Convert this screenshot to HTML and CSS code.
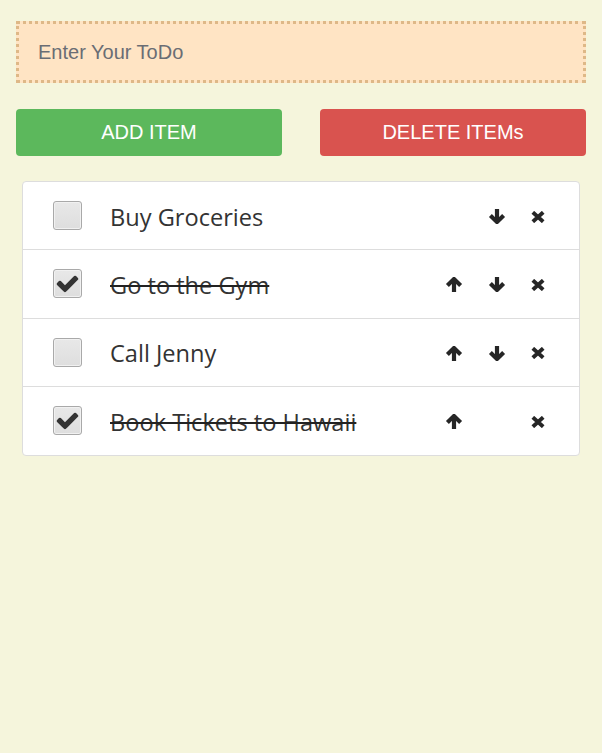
FILE: index.html
```html
<!DOCTYPE html>
<html lang="en">
<head>
<meta charset="utf-8">
<title>ToDo</title>
<link rel="stylesheet" href="styles.css">
</head>
<body>
<div class="app">
  <input class="todo-input" type="text" placeholder="Enter Your ToDo">
  <div class="actions">
    <button class="btn btn-add">ADD ITEM</button>
    <button class="btn btn-delete">DELETE ITEMs</button>
  </div>
  <ul class="list">
    <li class="item">
      <span class="box"></span>
      <span class="label">Buy Groceries</span>
      <span class="tools">
        <span class="slot"></span>
        <span class="slot"><svg class="ic" viewBox="0 0 18 15"><path d="M9 0V12.5"/><path d="M2.4 6.6L9 13L15.6 6.6"/></svg></span>
        <span class="slot slot-x"><svg class="ic ic-x" viewBox="0 0 14 12"><path d="M1.8 1.3L12.2 10.7M12.2 1.3L1.8 10.7"/></svg></span>
      </span>
    </li>
    <li class="item">
      <span class="box checked"><svg class="tick" viewBox="0 0 1792 1792"><path d="M1671 566q0 40-28 68l-724 724-136 136q-28 28-68 28t-68-28l-136-136-362-362q-28-28-28-68t28-68l136-136q28-28 68-28t68 28l294 295 656-657q28-28 68-28t68 28l136 136q28 28 28 68z"/></svg></span>
      <span class="label done">Go to the Gym</span>
      <span class="tools">
        <span class="slot"><svg class="ic" viewBox="0 0 18 15"><path d="M9 15V2.5"/><path d="M2.4 8.4L9 2L15.6 8.4"/></svg></span>
        <span class="slot"><svg class="ic" viewBox="0 0 18 15"><path d="M9 0V12.5"/><path d="M2.4 6.6L9 13L15.6 6.6"/></svg></span>
        <span class="slot slot-x"><svg class="ic ic-x" viewBox="0 0 14 12"><path d="M1.8 1.3L12.2 10.7M12.2 1.3L1.8 10.7"/></svg></span>
      </span>
    </li>
    <li class="item">
      <span class="box"></span>
      <span class="label">Call Jenny</span>
      <span class="tools">
        <span class="slot"><svg class="ic" viewBox="0 0 18 15"><path d="M9 15V2.5"/><path d="M2.4 8.4L9 2L15.6 8.4"/></svg></span>
        <span class="slot"><svg class="ic" viewBox="0 0 18 15"><path d="M9 0V12.5"/><path d="M2.4 6.6L9 13L15.6 6.6"/></svg></span>
        <span class="slot slot-x"><svg class="ic ic-x" viewBox="0 0 14 12"><path d="M1.8 1.3L12.2 10.7M12.2 1.3L1.8 10.7"/></svg></span>
      </span>
    </li>
    <li class="item">
      <span class="box checked"><svg class="tick" viewBox="0 0 1792 1792"><path d="M1671 566q0 40-28 68l-724 724-136 136q-28 28-68 28t-68-28l-136-136-362-362q-28-28-28-68t28-68l136-136q28-28 68-28t68 28l294 295 656-657q28-28 68-28t68 28l136 136q28 28 28 68z"/></svg></span>
      <span class="label done">Book Tickets to Hawaii</span>
      <span class="tools">
        <span class="slot"><svg class="ic" viewBox="0 0 18 15"><path d="M9 15V2.5"/><path d="M2.4 8.4L9 2L15.6 8.4"/></svg></span>
        <span class="slot"></span>
        <span class="slot slot-x"><svg class="ic ic-x" viewBox="0 0 14 12"><path d="M1.8 1.3L12.2 10.7M12.2 1.3L1.8 10.7"/></svg></span>
      </span>
    </li>
  </ul>
</div>
</body>
</html>
```
FILE: styles.css
```css
* { box-sizing: border-box; }
html, body { margin: 0; padding: 0; }
body {
  background: #f5f5dc;
  font-family: "Liberation Sans", Arial, sans-serif;
  width: 602px;
  height: 753px;
}
.app {
  padding: 21px 16px 0 16px;
}
.todo-input {
  display: block;
  width: 100%;
  height: 62px;
  margin: 0;
  border: 3px dotted #deb887;
  background: #ffe4c4;
  padding: 0 19px;
  font-family: "Liberation Sans", Arial, sans-serif;
  font-size: 20px;
  color: #555;
  outline: none;
}
.todo-input::placeholder { color: #6a6d74; opacity: 1; }
.actions {
  display: grid;
  grid-template-columns: 1fr 1fr;
  column-gap: 38px;
  margin-top: 26px;
}
.btn {
  height: 47px;
  border: none;
  border-radius: 4px;
  color: #fff;
  font-family: "Liberation Sans", Arial, sans-serif;
  font-size: 20px;
  padding: 0;
  margin: 0;
}
.btn-add { background: #5cb85c; }
.btn-delete { background: #d9534f; }
.list {
  list-style: none;
  margin: 25px 6px 0 6px;
  padding: 0;
  background: #fff;
  border: 1px solid #ddd;
  border-radius: 4px;
}
.item {
  display: flex;
  align-items: center;
  height: 67px;
}
.item + .item {
  border-top: 1px solid #ddd;
  height: 68.5px;
}
.box {
  flex: none;
  width: 29px;
  height: 29px;
  margin-left: 30px;
  border: 1px solid #a9a9a9;
  border-radius: 3px;
  background: linear-gradient(#e8e8e8, #dedede);
  box-shadow: inset 0 0 0 1px #f1f1f1;
  display: flex;
  align-items: center;
  justify-content: center;
}
.tick {
  width: 25px;
  height: 25px;
  fill: #333;
  margin-top: -1px;
  margin-right: 1px;
}
.label {
  flex: 1;
  margin-left: 28px;
  padding-top: 2px;
  font-family: "Open Sans", "Noto Sans", sans-serif;
  font-size: 23.6px;
  color: #333;
  white-space: nowrap;
}
.label.done {
  text-decoration: line-through;
  text-decoration-thickness: 2px;
  text-decoration-color: #222;
}
.tools {
  display: flex;
  align-items: center;
  gap: 25px;
  padding-right: 34px;
  padding-top: 2px;
}
.slot {
  width: 18px;
  height: 15px;
  display: flex;
  align-items: center;
  justify-content: center;
}
.slot-x { width: 14px; }
.ic {
  width: 18px;
  height: 15px;
  fill: none;
  stroke: #262626;
  stroke-width: 4.2;
  stroke-linecap: butt;
  stroke-linejoin: miter;
}
.ic-x {
  width: 14px;
  height: 12px;
  stroke-width: 3.9;
}
```
